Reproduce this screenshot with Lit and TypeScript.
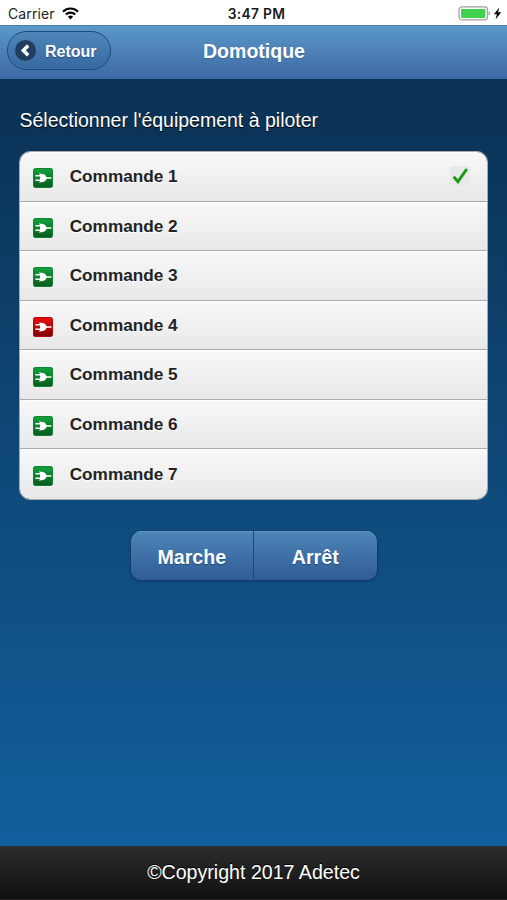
import { LitElement, html, css, svg } from "lit";
import { customElement, property } from "lit/decorators.js";

@customElement("plug-icon")
class PlugIcon extends LitElement {
  @property({ type: Boolean }) off = false;

  static styles = css`
    :host { display: block; width: 20px; height: 20px; }
    svg { display: block; }
  `;

  render() {
    const [top, bottom, edge] = this.off
      ? ["#ee0a12", "#7c0206", "#b8060c"]
      : ["#12a23c", "#075a1e", "#0c8430"];
    return html`<svg width="20" height="20" viewBox="0 0 20 20">
      <defs>
        <linearGradient id="g" x1="0" y1="0" x2="0" y2="1">
          <stop offset="0" stop-color=${top} />
          <stop offset="1" stop-color=${bottom} />
        </linearGradient>
      </defs>
      ${svg`<rect x=".5" y=".5" width="19" height="19" rx="1.8" fill="url(#g)" stroke=${edge} />`}
      <path d="M2.4 7.7H8M2.4 12.3H8M12.5 10h5.9" fill="none" stroke="#fff" stroke-width="1.4" />
      <path d="M6.2 4.9l1.6.9c3.6 0 5.1 1.4 6 4.2-.9 2.9-2.4 4.2-6 4.2l-1.6.9c.7-1.6.9-3.2.9-5s-.2-3.6-.9-5.2z" fill="#fff" />
    </svg>`;
  }
}

@customElement("app-root")
class AppRoot extends LitElement {
  static styles = css`
    :host {
      display: flex;
      flex-direction: column;
      box-sizing: border-box;
      width: 507px;
      height: 900px;
      overflow: hidden;
      font-family: "Liberation Sans", Arial, sans-serif;
      background: linear-gradient(#0b3154 79px, #115f9c 846px);
    }
    svg { display: block; }
    .status {
      display: grid;
      grid-template-columns: 1fr auto 1fr;
      align-items: center;
      height: 25px;
      box-sizing: border-box;
      padding: 2px 5px 0 8px;
      background: #fff;
      color: #222;
      font: 14px Inter, sans-serif;
    }
    .carrier { display: flex; align-items: center; gap: 7px; letter-spacing: .1px; }
    .time { font-weight: 600; font-size: 13.8px; color: #1a1a1a; padding-left: 3px; letter-spacing: .3px; }
    .power { display: flex; justify-content: flex-end; align-items: center; gap: 2px; }
    .bar {
      display: grid;
      grid-template-columns: 1fr auto 1fr;
      align-items: center;
      height: 54px;
      box-sizing: border-box;
      padding: 0 7px;
      border-top: 1px solid #4680ac;
      background: linear-gradient(#5a98c8, #3e68a4);
      color: #fff;
    }
    .back {
      justify-self: start;
      display: flex;
      align-items: center;
      gap: 9px;
      width: 104px;
      height: 39px;
      box-sizing: border-box;
      margin-bottom: 5px;
      padding: 3px 0 0 7px;
      border: 1px solid #174a7a;
      border-radius: 20px;
      background: linear-gradient(#4e87b8, #3868a2);
      box-shadow: inset 0 0 1px 1px #5d94c144;
      font-size: 16px;
      font-weight: bold;
      color: #fff;
      text-shadow: 0 1px 1px #194b7e;
    }
    .back svg { margin-top: -2px; }
    .title {
      font-size: 19.55px;
      line-height: 24px;
      font-weight: bold;
      text-shadow: 0 1px 1px #3e6790;
      margin-bottom: 4px;
      padding-left: 1px;
    }
    .content { flex: 1; padding: 29px 19px 0; }
    .prompt {
      margin: 0;
      padding-left: .5px;
      font-size: 19.5px;
      line-height: 24px;
      color: #fff;
      text-shadow: 0 1px 1px #000;
      font-weight: normal;
    }
    .list {
      margin: 19px 0 0;
      padding: 0;
      list-style: none;
      border: 1px solid #aaa;
      border-radius: 11px;
      overflow: hidden;
      height: 349px;
      box-sizing: border-box;
      display: grid;
      grid-template-rows: repeat(7, 1fr);
    }
    .row {
      display: flex;
      align-items: center;
      box-sizing: border-box;
      padding: 0 17px 0 12.7px;
      gap: 17px;
      background: linear-gradient(#f8f8f8, #e8e8e8);
      border-top: 1px solid #fff;
      border-bottom: 1px solid #aaa;
      color: #222;
      font-size: 17.2px;
      font-weight: bold;
      text-shadow: 0 1px 0 #fff;
    }
    .row:last-child { border-bottom: 0; }
    .row plug-icon { margin-top: 3px; }
    .name { flex: 1; line-height: 20px; padding-bottom: 1.4px; }
    .check { width: 20px; height: 20px; background: #e9e9e9; border-radius: 2px; margin-bottom: 2px; }
    .actions {
      display: flex;
      width: 248px;
      height: 51px;
      box-sizing: border-box;
      margin: 29.6px auto 0;
      border: 1px solid #123d66;
      border-radius: 11px;
      overflow: hidden;
      box-shadow: 0 1px 2px #0003;
    }
    .action {
      flex: 1;
      border: 0;
      padding: 4px 0 0;
      background: linear-gradient(#4d86b7, #315b97);
      box-shadow: inset 0 1px 0 #6295c0;
      color: #fff;
      font: bold 19.6px "Liberation Sans", Arial, sans-serif;
      text-shadow: 0 1px 1px #194b7e;
    }
    .action + .action { border-left: 1px solid #1b4a7a; }
    .footer {
      height: 54px;
      box-sizing: border-box;
      border-top: 1px solid #26343e;
      border-bottom: 1px solid #292124;
      background: linear-gradient(#2c2c2c, #111);
      color: #fff;
      font-size: 19.6px;
      line-height: 51px;
      text-align: center;
      text-shadow: 0 -1px 0 #000;
    }
  `;

  private items = [1, 2, 3, 4, 5, 6, 7].map((n) => ({
    name: `Commande ${n}`,
    off: n === 4,
    selected: n === 1,
  }));

  render() {
    return html`
      <div class="status">
        <div class="carrier">
          <span>Carrier</span>
          <svg width="17" height="13" viewBox="0 0 17 13" fill="none" stroke="#050505" stroke-width="2.2">
            <path d="M1 4.6a10.6 10.6 0 0 1 15 0M3.8 7.5a6.6 6.6 0 0 1 9.4 0" />
            <path d="M5.9 9.7a3.7 3.7 0 0 1 5.2 0L8.5 12.5z" fill="#050505" stroke="none" />
          </svg>
        </div>
        <span class="time">3:47 PM</span>
        <div class="power">
          <svg width="33" height="15" viewBox="0 0 33 15">
            <rect x="1" y=".9" width="28.4" height="13" rx="2.8" fill="#fff" stroke="#a0a0a0" stroke-width="1.2" />
            <rect x="3" y="2.9" width="24.4" height="9" rx=".8" fill="#40d24e" />
            <path d="M30.6 5.2c1.7.6 1.7 3.8 0 4.4z" fill="#8a8a8a" />
          </svg>
          <svg width="9" height="13" viewBox="0 0 9 13"><path d="M6.3.4L.9 7.3h3L2.5 12.6 8.3 5.3H5.1z" fill="#050505" /></svg>
        </div>
      </div>
      <header class="bar">
        <div class="back">
          <svg width="21" height="21" viewBox="0 0 21 21">
            <circle cx="10.5" cy="10.5" r="10.5" fill="#203f60" />
            <path d="M13.2 5.6L8.3 10.4 13.2 15.2" fill="none" stroke="#fff" stroke-width="3.5" />
          </svg>
          <span>Retour</span>
        </div>
        <span class="title">Domotique</span>
      </header>
      <main class="content">
        <h2 class="prompt">Sélectionner l'équipement à piloter</h2>
        <ul class="list">
          ${this.items.map(
            (item) => html`<li class="row">
              <plug-icon ?off=${item.off}></plug-icon>
              <span class="name">${item.name}</span>
              ${item.selected
                ? html`<svg class="check" viewBox="0 0 20 20">
                    <path d="M3.7 10.7l4.3 5L16.8 3" fill="none" stroke="#169c10" stroke-width="2.9" />
                  </svg>`
                : ""}
            </li>`
          )}
        </ul>
        <div class="actions">
          <button class="action">Marche</button>
          <button class="action">Arrêt</button>
        </div>
      </main>
      <footer class="footer">©Copyright 2017 Adetec</footer>
    `;
  }
}
